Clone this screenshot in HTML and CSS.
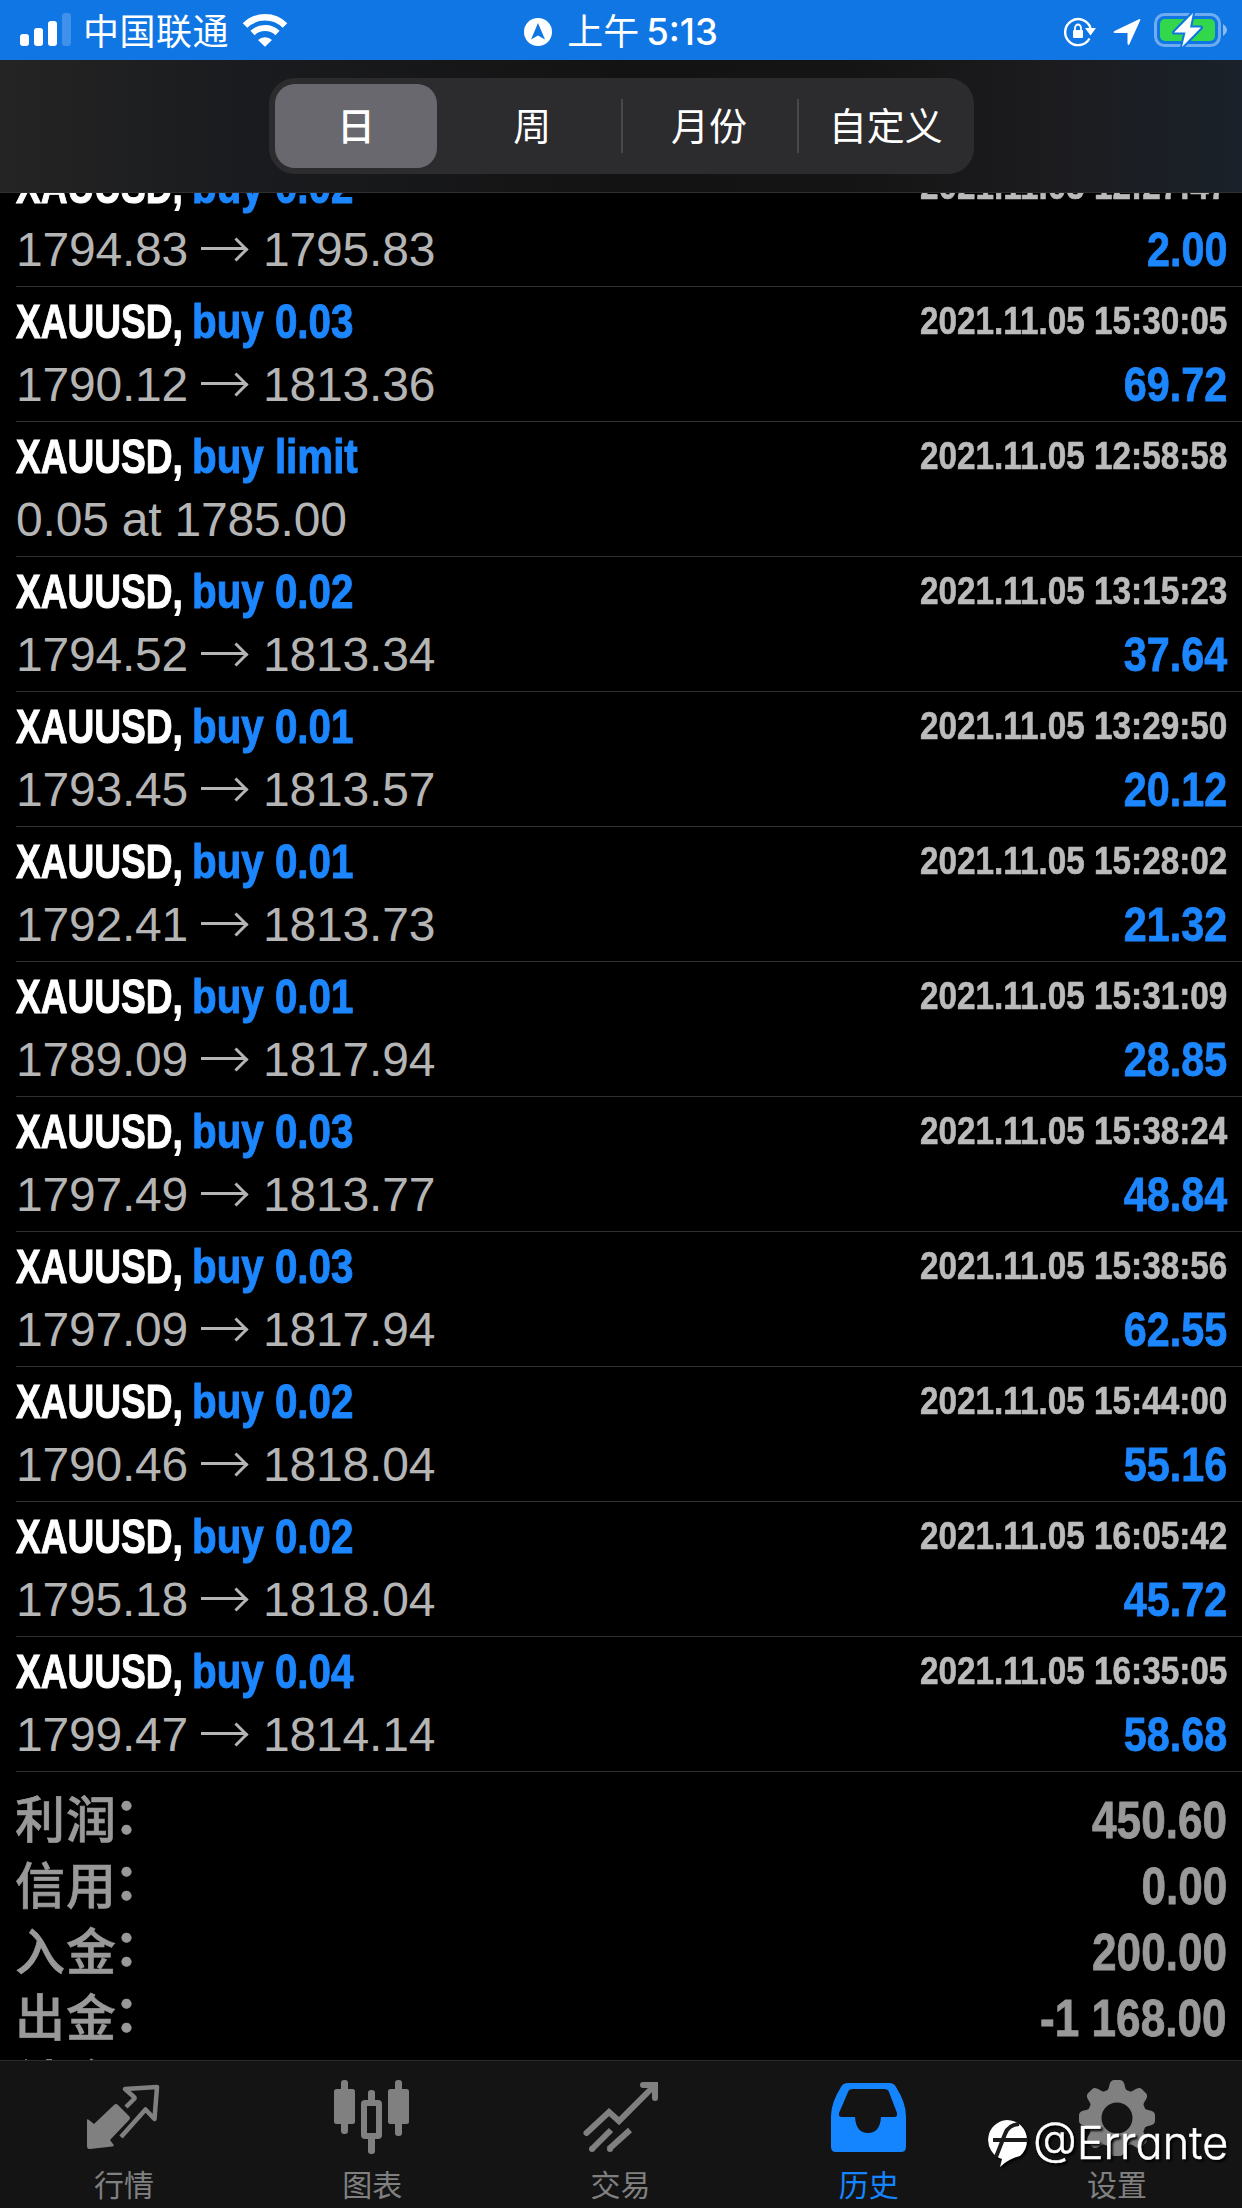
FILE: index.html
```html
<!DOCTYPE html>
<html lang="zh-CN">
<head>
  <meta charset="UTF-8">
  <meta name="viewport" content="width=device-width, initial-scale=1.0">
  <title>历史</title>
  <link rel="stylesheet" href="styles.css">
</head>
<body>

  <div class="status-bar">
    <div class="status-left">
      <svg class="signal" width="52" height="34" viewBox="0 0 52 34" fill="#fff">
        <rect x="0" y="21" width="9" height="12" rx="3"/>
        <rect x="14" y="15" width="9" height="18" rx="3"/>
        <rect x="28" y="8" width="9" height="25" rx="3"/>
        <rect x="42" y="0" width="9" height="33" rx="3" opacity=".2"/>
      </svg>
      <span class="carrier">中国联通</span>
      <svg class="wifi" width="46" height="34" viewBox="0 0 46 34" fill="none" stroke="#fff">
        <path d="M3 12.500a28.500 28.500 0 0 1 40 0" stroke-width="6.500"/>
        <path d="M10.500 20a18 18 0 0 1 25 0" stroke-width="6"/>
        <path d="M16 27a10 10 0 0 1 14 0l-7 6.800z" fill="#fff" stroke="none"/>
      </svg>
    </div>
    <div class="status-time">
      <svg width="28" height="28" viewBox="0 0 28 28">
        <circle cx="14" cy="14" r="14" fill="#fff"/>
        <path d="M14 5l7 16.500-7-4-7 4z" fill="#0f76e4"/>
      </svg>
      <span class="ampm">上午</span>
      <span class="clock">5:13</span>
    </div>
    <div class="status-right">
      <svg class="lock" width="32" height="30" viewBox="0 0 32 30" fill="none" stroke="#fff">
        <path d="M25.500 21.500a13 13 0 1 1 1-10.500" stroke-width="2.400"/>
        <path d="M21 11h11l-5.500 7.500z" fill="#fff" stroke="none"/>
        <rect x="9" y="13" width="10" height="8" rx="1" fill="#fff" stroke="none"/>
        <path d="M11 14v-3a3 3.500 0 0 1 6 0v3" stroke-width="1.800"/>
      </svg>
      <svg class="location" width="28" height="28" viewBox="0 0 28 28">
        <path d="M1.500 13L26 1.200q2-.7 1 1.500L16.500 26q-1.500 2-2-.5V15H2q-2.500-.5-.5-2z" fill="#fff"/>
      </svg>
      <svg class="battery" width="74" height="38" viewBox="0 0 74 38">
        <rect x="1.500" y="3.500" width="64" height="31" rx="9" fill="none" stroke="#fff" stroke-opacity=".4" stroke-width="3"/>
        <rect x="6" y="8" width="55" height="22" rx="5" fill="#32d74b"/>
        <path d="M69 13q8 6 0 12z" fill="#fff" opacity=".5"/>
        <path d="M39 2L20 21.500h11.500L28 36l19-19.500H36z" fill="#fff" stroke="#0f76e4" stroke-width="4" stroke-linejoin="round" paint-order="stroke"/>
      </svg>
    </div>
  </div>

  <div class="top-bar">
    <div class="segments">
      <div class="segment active">日</div>
      <div class="segment">周</div>
      <div class="segment divided">月份</div>
      <div class="segment divided">自定义</div>
    </div>
  </div>

  <div class="history">
    <div class="deal">
      <div class="line"><span class="symbol">XAUUSD,</span><span class="action">buy 0.02</span><span class="date">2021.11.05 12:27:47</span></div>
      <div class="line"><span class="price">1794.83<i class="arrow"></i>1795.83</span><span class="profit">2.00</span></div>
    </div>
    <div class="deal">
      <div class="line"><span class="symbol">XAUUSD,</span><span class="action">buy 0.03</span><span class="date">2021.11.05 15:30:05</span></div>
      <div class="line"><span class="price">1790.12<i class="arrow"></i>1813.36</span><span class="profit">69.72</span></div>
    </div>
    <div class="deal">
      <div class="line"><span class="symbol">XAUUSD,</span><span class="action">buy limit</span><span class="date">2021.11.05 12:58:58</span></div>
      <div class="line"><span class="price">0.05 at 1785.00</span></div>
    </div>
    <div class="deal">
      <div class="line"><span class="symbol">XAUUSD,</span><span class="action">buy 0.02</span><span class="date">2021.11.05 13:15:23</span></div>
      <div class="line"><span class="price">1794.52<i class="arrow"></i>1813.34</span><span class="profit">37.64</span></div>
    </div>
    <div class="deal">
      <div class="line"><span class="symbol">XAUUSD,</span><span class="action">buy 0.01</span><span class="date">2021.11.05 13:29:50</span></div>
      <div class="line"><span class="price">1793.45<i class="arrow"></i>1813.57</span><span class="profit">20.12</span></div>
    </div>
    <div class="deal">
      <div class="line"><span class="symbol">XAUUSD,</span><span class="action">buy 0.01</span><span class="date">2021.11.05 15:28:02</span></div>
      <div class="line"><span class="price">1792.41<i class="arrow"></i>1813.73</span><span class="profit">21.32</span></div>
    </div>
    <div class="deal">
      <div class="line"><span class="symbol">XAUUSD,</span><span class="action">buy 0.01</span><span class="date">2021.11.05 15:31:09</span></div>
      <div class="line"><span class="price">1789.09<i class="arrow"></i>1817.94</span><span class="profit">28.85</span></div>
    </div>
    <div class="deal">
      <div class="line"><span class="symbol">XAUUSD,</span><span class="action">buy 0.03</span><span class="date">2021.11.05 15:38:24</span></div>
      <div class="line"><span class="price">1797.49<i class="arrow"></i>1813.77</span><span class="profit">48.84</span></div>
    </div>
    <div class="deal">
      <div class="line"><span class="symbol">XAUUSD,</span><span class="action">buy 0.03</span><span class="date">2021.11.05 15:38:56</span></div>
      <div class="line"><span class="price">1797.09<i class="arrow"></i>1817.94</span><span class="profit">62.55</span></div>
    </div>
    <div class="deal">
      <div class="line"><span class="symbol">XAUUSD,</span><span class="action">buy 0.02</span><span class="date">2021.11.05 15:44:00</span></div>
      <div class="line"><span class="price">1790.46<i class="arrow"></i>1818.04</span><span class="profit">55.16</span></div>
    </div>
    <div class="deal">
      <div class="line"><span class="symbol">XAUUSD,</span><span class="action">buy 0.02</span><span class="date">2021.11.05 16:05:42</span></div>
      <div class="line"><span class="price">1795.18<i class="arrow"></i>1818.04</span><span class="profit">45.72</span></div>
    </div>
    <div class="deal">
      <div class="line"><span class="symbol">XAUUSD,</span><span class="action">buy 0.04</span><span class="date">2021.11.05 16:35:05</span></div>
      <div class="line"><span class="price">1799.47<i class="arrow"></i>1814.14</span><span class="profit">58.68</span></div>
    </div>

    <div class="totals">
      <div class="total"><span>利润<b class="colon">：</b></span><span class="sum">450.60</span></div>
      <div class="total"><span>信用<b class="colon">：</b></span><span class="sum">0.00</span></div>
      <div class="total"><span>入金<b class="colon">：</b></span><span class="sum">200.00</span></div>
      <div class="total"><span>出金<b class="colon">：</b></span><span class="sum">-1 168.00</span></div>
      <div class="total"><span>结余<b class="colon">：</b></span></div>
    </div>
  </div>

  <div class="tab-bar">
    <div class="tab">
      <svg width="76" height="76" viewBox="0 0 76 76">
        <path d="M1 41q-.5-3 2-1l5 4L28 25q2-2 4 0l11 11q2 2 0 4L24 60l3 4q2 2-1 2.500L4 69q-3 .3-3-3z" fill="currentColor"/>
        <path d="M40 27l8-8q1-1 0-2l-9-8L71 7l-2.500 32-9-9.500L35 57" fill="none" stroke="currentColor" stroke-width="4.500" stroke-linejoin="round"/>
      </svg>
      <span>行情</span>
    </div>
    <div class="tab">
      <svg width="76" height="76" viewBox="0 0 76 76" fill="currentColor">
        <rect x="0" y="9" width="21" height="35" rx="2.500"/>
        <rect x="7" y="0" width="7" height="54" rx="3"/>
        <rect x="54" y="9" width="21" height="35" rx="2.500"/>
        <rect x="61" y="0" width="7" height="56" rx="3"/>
        <rect x="30" y="23" width="15" height="33" rx="1" fill="none" stroke="currentColor" stroke-width="6"/>
        <rect x="34" y="10" width="7" height="12" rx="3"/>
        <rect x="34" y="57" width="7" height="17" rx="3"/>
      </svg>
      <span>图表</span>
    </div>
    <div class="tab">
      <svg width="76" height="76" viewBox="0 0 76 76" fill="none" stroke="currentColor" stroke-width="6">
        <path d="M3.500 53L26 32l10 9L71 6" stroke-linecap="round"/>
        <path d="M60 5h12v13" stroke-linecap="round"/>
        <path d="M9 69l19-19M26 69l21-19"/>
        <circle cx="9" cy="69" r="3" fill="currentColor" stroke="none"/>
        <circle cx="27" cy="69" r="3" fill="currentColor" stroke="none"/>
      </svg>
      <span>交易</span>
    </div>
    <div class="tab active">
      <svg width="76" height="76" viewBox="0 0 76 76">
        <path fill="currentColor" fill-rule="evenodd" d="M17 3h41q5 0 7 4 10 16 10 29v31q0 5-5 5H5q-5 0-5-5V36Q0 23 10 7q2-4 7-4zM22 9q-4 0-5 3L8 33q-1 4 3 4h13q1 16 13 16t13-16h13q4 0 3-4L58 12q-1-3-5-3z"/>
      </svg>
      <span>历史</span>
    </div>
    <div class="tab">
      <svg width="76" height="76" viewBox="0 0 76 76">
        <g fill="currentColor">
          <path id="tooth" d="M26 12q3-1 4-5 1-7 5-7h6q4 0 5 7 1 4 4 5v8H26z"/>
          <use href="#tooth" transform="rotate(45 38 38)"/>
          <use href="#tooth" transform="rotate(90 38 38)"/>
          <use href="#tooth" transform="rotate(135 38 38)"/>
          <use href="#tooth" transform="rotate(180 38 38)"/>
          <use href="#tooth" transform="rotate(225 38 38)"/>
          <use href="#tooth" transform="rotate(270 38 38)"/>
          <use href="#tooth" transform="rotate(315 38 38)"/>
        </g>
        <circle cx="38" cy="38" r="22.500" fill="none" stroke="currentColor" stroke-width="14"/>
      </svg>
      <span>设置</span>
    </div>
  </div>

  <div class="watermark">
    <svg width="42" height="50" viewBox="0 0 42 50">
      <path d="M20 0a20 20 0 0 1 20 20q0 10-7 16-12 3-20 11l2-8A20 20 0 0 1 20 0z" fill="#fff"/>
      <path d="M32 4Q21 5 18 14L9 37M6 20h35" fill="none" stroke="#1c1c1c" stroke-width="4"/>
    </svg>
    <span>@Errante</span>
  </div>

</body>
</html>
```
FILE: styles.css
```css
* {
  box-sizing: border-box;
}

html, body {
  margin: 0;
  padding: 0;
  background: #000;
}

body {
  width: 1242px;
  height: 2208px;
  overflow: hidden;
  position: relative;
  display: flex;
  flex-direction: column;
  font-family: "Liberation Sans", "Noto Sans CJK SC", sans-serif;
}

svg {
  display: block;
  flex: none;
}

/* status bar */
.status-bar {
  height: 60px;
  flex: none;
  display: flex;
  justify-content: space-between;
  background: #0f76e4;
  color: #fff;
  font-family: Inter, "Noto Sans CJK SC", sans-serif;
  font-size: 36px;
  line-height: 60px;
}

.status-left, .status-time, .status-right {
  display: flex;
  align-items: center;
}

.status-left {
  width: 500px;
  padding-left: 20px;
}

.carrier {
  margin-left: 11px;
  padding-top: 3px;
  letter-spacing: 0.5px;
}

.wifi {
  margin-left: 13px;
}

.status-time {
  padding-top: 3px;
}

.ampm {
  margin-left: 15px;
}

.clock {
  margin-left: 7px;
  font-size: 36.500px;
  font-weight: 500;
}

.status-right {
  width: 500px;
  justify-content: flex-end;
  padding-right: 14px;
}

.lock, .location {
  margin-top: 3px;
}

.location {
  margin-left: 17px;
  margin-right: 13px;
}

/* period switch */
.top-bar {
  height: 133px;
  flex: none;
  padding-top: 18px;
  background: linear-gradient(90deg, #242424 0, #1a1b1e 20%, #131313 50%, #141414 68%, #1c1c1f 85%, #1a212a 100%);
  border-bottom: 1px solid #303032;
}

.segments {
  display: flex;
  width: 705px;
  height: 96px;
  margin-left: 269px;
  padding: 6px 0 6px 6px;
  border-radius: 26px;
  background: #2c2c2f;
}

.segment {
  flex: 1;
  position: relative;
  color: #fff;
  font-size: 38px;
  line-height: 87px;
  text-align: center;
}

.segment.active {
  flex: none;
  width: 162px;
  margin-right: 7px;
  border-radius: 20px;
  background: #69686e;
  font-weight: 500;
}

.segment.divided::before {
  content: "";
  position: absolute;
  left: 0;
  top: 15px;
  width: 2px;
  height: 54px;
  background: #47474b;
}

/* list of closed deals */
.history {
  flex: 1;
  min-height: 0;
  overflow: hidden;
}

.deal {
  height: 135px;
  margin-left: 16px;
  padding: 4px 15px 0 0;
  border-bottom: 1px solid #303030;
}

.deal:first-child {
  margin-top: -41px;
}

.line {
  display: flex;
  height: 63px;
  line-height: 62px;
  font-size: 48px;
  white-space: nowrap;
}

.symbol {
  width: 176px;
  color: #fff;
  font-weight: bold;
  -webkit-text-stroke: 1px;
  transform: scaleX(0.772);
  transform-origin: left;
}

.action {
  color: #1c86ff;
  font-weight: bold;
  -webkit-text-stroke: 1px;
  transform: scaleX(0.84);
  transform-origin: left;
}

.date {
  margin-left: auto;
  color: #bbb;
  font-size: 38.500px;
  line-height: 60px;
  font-weight: bold;
  -webkit-text-stroke: 0.6px;
  transform: scaleX(0.865);
  transform-origin: right;
}

.price {
  color: #b5b5b5;
  letter-spacing: -0.2px;
}

.arrow {
  display: inline-block;
  position: relative;
  width: 45px;
  height: 3px;
  margin: 0 17px 0 13px;
  background: #b5b5b5;
  vertical-align: 16px;
}

.arrow::after {
  content: "";
  position: absolute;
  right: 1px;
  top: -6px;
  width: 14px;
  height: 14px;
  border: solid #b5b5b5;
  border-width: 3px 3px 0 0;
  transform: rotate(45deg);
}

.profit {
  margin-left: auto;
  color: #1c86ff;
  font-size: 48px;
  line-height: 61px;
  font-weight: bold;
  -webkit-text-stroke: 0.8px;
  transform: scaleX(0.86);
  transform-origin: right;
}

.totals {
  padding: 15px 15px 0 15px;
  color: #999;
}

.total {
  display: flex;
  justify-content: space-between;
  height: 66px;
  line-height: 59px;
  font-family: "Noto Sans CJK SC", sans-serif;
  font-size: 50px;
  font-weight: 500;
  letter-spacing: 1px;
  -webkit-text-stroke: 0.6px;
}

.colon {
  position: relative;
  left: -3px;
  top: -4px;
}

.sum {
  font-family: "Liberation Sans", sans-serif;
  font-weight: bold;
  font-size: 51px;
  line-height: 67px;
  letter-spacing: 0;
  -webkit-text-stroke: 0.8px;
  transform: scaleX(0.865);
  transform-origin: right;
}

/* bottom tabs */
.tab-bar {
  height: 148px;
  flex: none;
  display: flex;
  padding-right: 1px;
  background: #141414;
  border-top: 1px solid #2b2b2b;
}

.tab {
  flex: 1;
  display: flex;
  flex-direction: column;
  align-items: center;
  padding-top: 19px;
  color: #808080;
}

.tab span {
  margin-top: 10px;
  font-size: 30px;
  line-height: 40px;
}

.tab.active {
  color: #1485ff;
}

.watermark {
  position: absolute;
  left: 987px;
  top: 2120px;
  display: flex;
  color: #fff;
  font-family: Inter, sans-serif;
  font-size: 45px;
  font-weight: 300;
  line-height: 46px;
  font-feature-settings: "cv11";
  filter: drop-shadow(2px 2px 1px #000);
  -webkit-text-stroke: 0.5px;
}

.watermark span {
  margin-left: 4px;
}
```
